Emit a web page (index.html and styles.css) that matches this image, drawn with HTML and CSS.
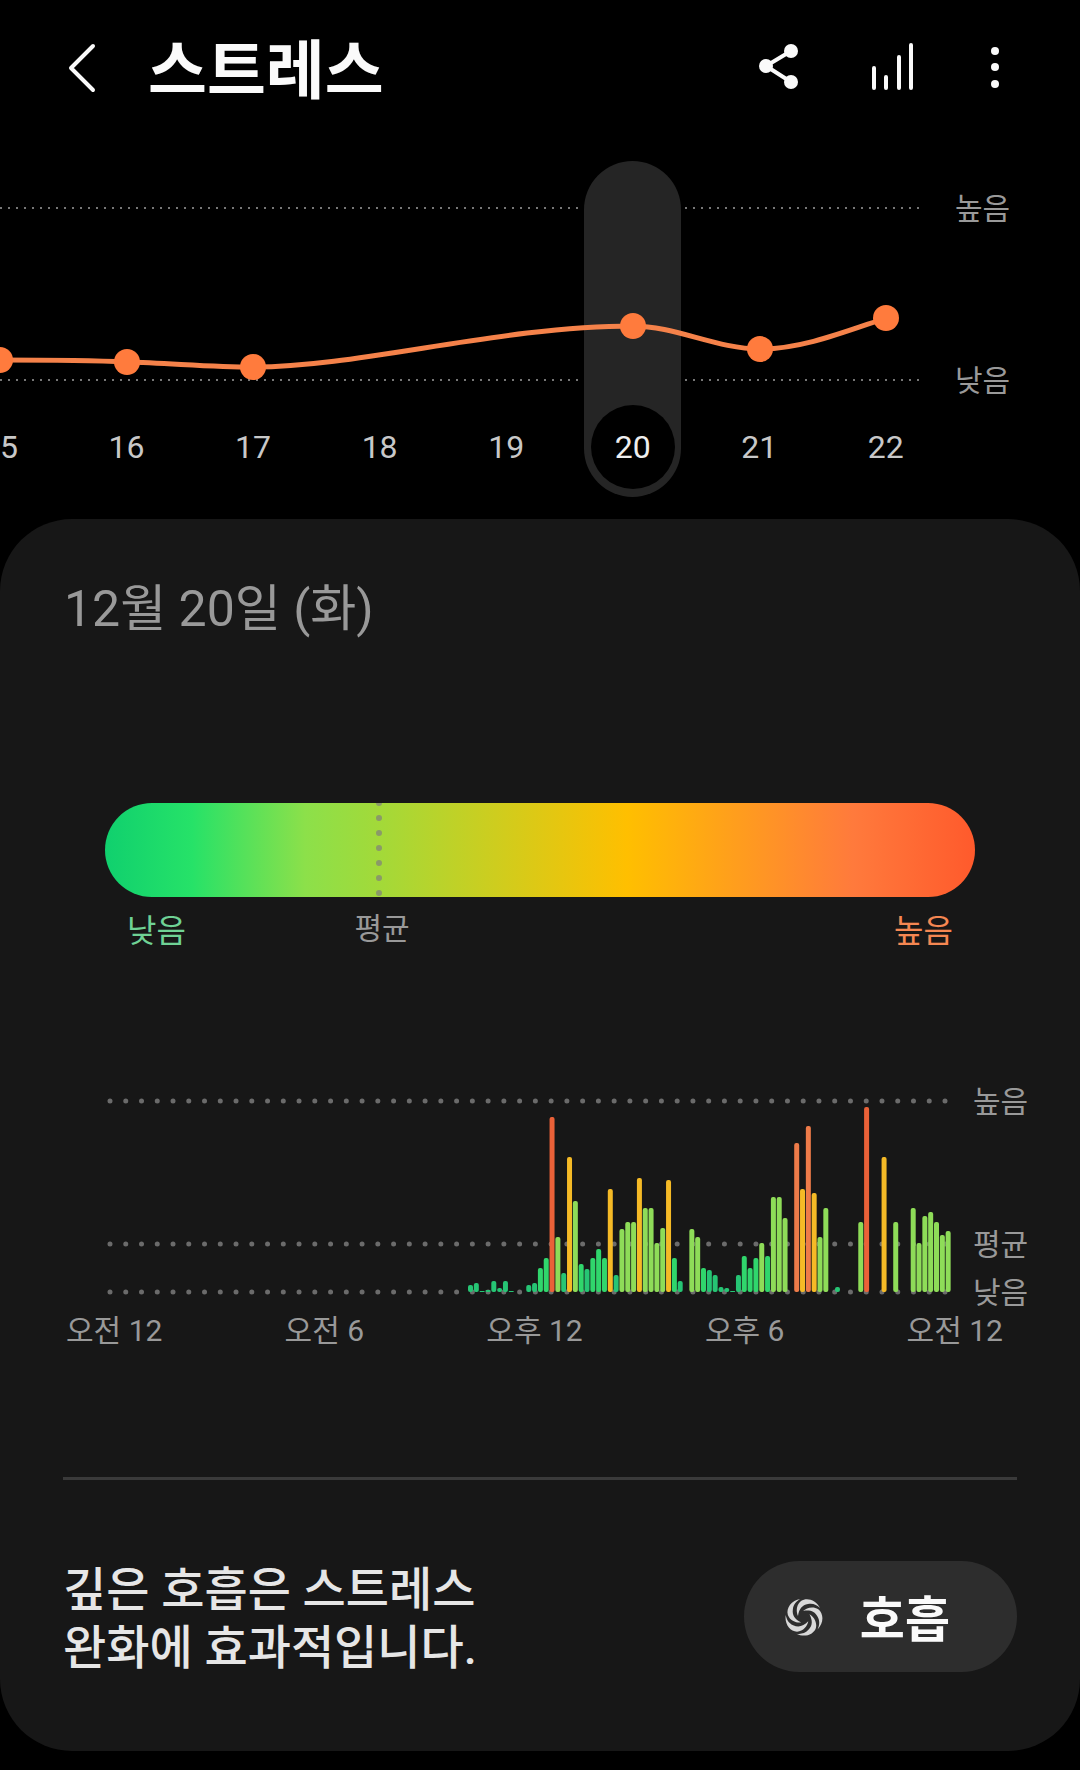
FILE: index.html
```html
<!DOCTYPE html>
<html lang="ko">
<head>
  <meta charset="utf-8">
  <meta name="viewport" content="width=device-width, initial-scale=1">
  <title>스트레스</title>
  <link rel="stylesheet" href="styles.css">
</head>
<body>
  <header class="app-bar">
    <button class="icon-button" type="button" aria-label="뒤로">
      <svg width="48" height="56" viewBox="0 0 48 56" fill="none" stroke="currentColor" stroke-width="4" stroke-linecap="round" stroke-linejoin="round"><path d="M35 6 13 28l22 22"/></svg>
    </button>
    <h1 class="app-title">스트레스</h1>
    <div class="app-actions">
      <button class="icon-button" type="button" aria-label="공유">
        <svg width="48" height="56" viewBox="0 0 48 56" fill="currentColor"><path d="M37 11 12 26l25 16" fill="none" stroke="currentColor" stroke-width="4"/><circle cx="37" cy="11" r="7"/><circle cx="12" cy="26" r="7"/><circle cx="37" cy="42" r="7"/></svg>
      </button>
      <button class="icon-button" type="button" aria-label="통계">
        <svg width="48" height="56" viewBox="0 0 48 56" fill="none" stroke="currentColor" stroke-width="4" stroke-linecap="round"><path d="M4 28v20M16 37v11M29 17v31M41 5v43"/></svg>
      </button>
      <button class="icon-button" type="button" aria-label="옵션 더보기">
        <svg width="18" height="56" viewBox="0 0 18 56" fill="currentColor"><circle cx="9" cy="11" r="4"/><circle cx="9" cy="27" r="4"/><circle cx="9" cy="44" r="4"/></svg>
      </button>
    </div>
  </header>

  <main>
    <section class="trend" aria-label="일별 스트레스">
      <div class="trend-plot">
        <div class="days">
          <button class="day" type="button"><span class="day-number">15</span></button>
          <button class="day" type="button"><span class="day-number">16</span></button>
          <button class="day" type="button"><span class="day-number">17</span></button>
          <button class="day" type="button"><span class="day-number">18</span></button>
          <button class="day" type="button"><span class="day-number">19</span></button>
          <button class="day is-selected" type="button" aria-pressed="true"><span class="day-number">20</span></button>
          <button class="day" type="button"><span class="day-number">21</span></button>
          <button class="day" type="button"><span class="day-number">22</span></button>
        </div>
        <svg class="trend-chart" viewBox="0 0 949 383" aria-hidden="true">
          <path class="trend-grid" d="M0 72H583M685 72H924M0 244H583M685 244H924"/>
          <path class="trend-line" d="M0 224C42 224 84 224 127 226C169 227 211 231 253 231C360 231 500 190 633 190C675 190 717 213 760 213C802 213 844 196 886 182"/>
          <g class="trend-dots"><circle cx="0" cy="224" r="13"/><circle cx="127" cy="226" r="13"/><circle cx="253" cy="231" r="13"/><circle cx="633" cy="190" r="13"/><circle cx="760" cy="213" r="13"/><circle cx="886" cy="182" r="13"/></g>
        </svg>
      </div>
      <div class="trend-levels"><span>높음</span><span>낮음</span></div>
    </section>

    <article class="card">
      <h2 class="date">12월 20일 (화)</h2>

      <section class="scale" style="--average: 63%" aria-label="스트레스 평균">
        <div class="scale-bar">
          <svg class="scale-marker" width="6" height="94" viewBox="0 0 6 94"><path d="M3 0V94"/></svg>
        </div>
        <div class="scale-labels">
          <span class="scale-low">낮음</span>
          <span class="scale-average">평균</span>
          <span class="scale-high">높음</span>
        </div>
      </section>

      <section class="hourly" aria-label="시간별 스트레스">
        <div class="hourly-body">
          <svg class="hourly-chart" viewBox="0 0 920 230" aria-hidden="true">
            <g class="hourly-grid">
              <path pathLength="53" d="M57 20H892"/>
              <path pathLength="53" d="M57 163H892"/>
              <path pathLength="53" d="M57 211H892"/>
            </g>
            <g id="bars"></g>
          </svg>
          <div class="hourly-levels"><span>높음</span><span>평균</span><span>낮음</span></div>
        </div>
        <div class="hours"><span>오전 12</span><span>오전 6</span><span>오후 12</span><span>오후 6</span><span>오전 12</span></div>
      </section>

      <section class="breathe">
        <p class="breathe-text">깊은 호흡은 스트레스<br>완화에 효과적입니다.</p>
        <button class="breathe-button" type="button">
          <svg width="38" height="38" viewBox="-19 -19 38 38" fill="currentColor" aria-hidden="true">
            <defs><path id="blade" d="M16-9C12-17 3-20-3-16C-8-12-8-5-6-1C-5-8-2-12 4-13C9-14 13-12 16-9Z"/></defs>
            <use href="#blade"/><use href="#blade" transform="rotate(72)"/><use href="#blade" transform="rotate(144)"/><use href="#blade" transform="rotate(216)"/><use href="#blade" transform="rotate(288)"/>
          </svg>
          <span class="breathe-label">호흡</span>
        </button>
      </section>
    </article>
  </main>
  <script src="chart.js"></script>
</body>
</html>
```
FILE: styles.css
```css
* {
  box-sizing: border-box;
}

body {
  margin: 0;
  background: #000;
  color: #999;
  font-family: Roboto, "Noto Sans CJK KR", sans-serif;
  font-size: 30px;
  line-height: 40px;
}

button {
  padding: 0;
  border: 0;
  background: none;
  color: inherit;
  font: inherit;
}

svg {
  display: block;
}

h1,
h2,
p {
  margin: 0;
}

.app-bar {
  display: flex;
  align-items: center;
  height: 136px;
  padding: 0 76px 0 58px;
  color: #fafafa;
}

.app-title {
  margin-left: 42px;
  padding-top: 8px;
  font-size: 64px;
  font-weight: 700;
  line-height: 80px;
}

.app-actions {
  display: flex;
  gap: 68px;
  margin-left: auto;
}

.trend {
  display: grid;
  grid-template-columns: minmax(0, 1fr) 131px;
}

.trend-plot {
  display: grid;
  overflow: hidden;
}

.trend-plot > * {
  grid-area: 1 / 1;
}

.trend-chart {
  width: 100%;
  pointer-events: none;
}

.trend-grid {
  fill: none;
  stroke: #777;
  stroke-width: 2;
  stroke-dasharray: 2 6;
}

.trend-line {
  fill: none;
  stroke: #f5824a;
  stroke-width: 5;
}

.trend-dots {
  fill: #ff7b3d;
}

.days {
  display: grid;
  grid-template-columns: repeat(8, calc(100% / 7.5));
  justify-content: end;
  padding: 25px 0 22px;
}

.day {
  display: flex;
  align-items: flex-end;
  justify-content: center;
  justify-self: center;
  width: 97px;
  padding-bottom: 8px;
  border-radius: 49px;
  color: #c8c8c8;
  font-size: 32px;
}

.day-number {
  width: 84px;
  border-radius: 50%;
  line-height: 84px;
  text-align: center;
}

.day.is-selected {
  background: #252525;
  color: #eee;
}

.is-selected .day-number {
  background: #000;
}

.trend-levels {
  display: flex;
  flex-direction: column;
  gap: 132px;
  padding: 53px 0 0 6px;
}

.card {
  margin-bottom: 19px;
  padding: 60px 0 74px;
  border-radius: 72px;
  background: #171717;
}

.date {
  padding: 0 64px;
  font-size: 50px;
  font-weight: 400;
  line-height: 60px;
}

.scale {
  padding: 164px 105px 0;
}

.scale-bar,
.scale-labels {
  display: grid;
  grid-template-columns: var(--average) 1fr;
}

.scale-bar {
  height: 94px;
  overflow: hidden;
  border-radius: 47px;
  background: linear-gradient(90deg, #10d06e, #26e268 10%, #8ce04a 23%, #a4d938 32%, #ffbf00 60%, #ff7a3c 86%, #ff5a2c);
}

.scale-marker {
  justify-self: center;
  fill: none;
  stroke: #8a9a68;
  stroke-width: 6;
  stroke-linecap: round;
  stroke-dasharray: 0 15;
}

.scale-labels {
  height: 52px;
  padding-top: 12px;
}

.scale-low,
.scale-average {
  grid-area: 1 / 1;
}

.scale-low,
.scale-high {
  padding: 2px 22px 0;
  font-size: 32px;
}

.scale-low {
  color: #6fd295;
}

.scale-average {
  justify-self: center;
  padding-left: 6px;
}

.scale-high {
  justify-self: end;
  color: #f58752;
}

.hourly {
  padding-top: 132px;
}

.hourly-body {
  display: grid;
  grid-template-columns: minmax(0, 1fr) 54px;
  padding: 0 53px;
}

.hourly-chart {
  width: 100%;
}

.hourly-grid {
  fill: none;
  stroke: #6b6b6b;
  stroke-width: 5;
  stroke-linecap: round;
  stroke-dasharray: 0 1;
}

.hourly-levels {
  display: grid;
  grid-template-rows: 143px 48px 38px;
  padding-top: 1px;
  white-space: nowrap;
}

.hours {
  display: flex;
  justify-content: space-between;
  padding: 0 77px 0 66px;
}

.breathe {
  display: flex;
  align-items: flex-start;
  justify-content: space-between;
  margin: 126px 63px 0;
  padding-top: 81px;
  border-top: 3px solid #3a3a3a;
}

.breathe-text {
  color: #e6e6e6;
  font-size: 47px;
  font-weight: 500;
  line-height: 58px;
}

.breathe-button {
  display: flex;
  align-items: center;
  gap: 37px;
  height: 111px;
  padding: 0 67px 0 41px;
  border-radius: 56px;
  background: #2d2d2d;
  color: #fafafa;
  font-size: 49px;
  font-weight: 700;
}

.breathe-button svg {
  color: #d8d8d8;
}

.breathe-label {
  padding-top: 8px;
}
```
FILE: chart.js
```js
// Ten-minute readings: [slot, height, level]
const readings = [
  [0, 7, 'low'], [1, 9, 'low'], [2, 1, 'low'], [3, 2, 'low'], [4, 11, 'low'], [5, 4, 'low'], [6, 11, 'low'], [7, 1, 'low'],
  [10, 7, 'low'], [11, 9, 'low'], [12, 24, 'mild'], [13, 34, 'mild'], [14, 175, 'peak'], [15, 55, 'mid'], [16, 19, 'low'],
  [17, 135, 'warm'], [18, 91, 'mid'], [19, 28, 'mild'], [20, 23, 'low'], [21, 34, 'mild'], [22, 43, 'mild'], [23, 34, 'mild'],
  [24, 103, 'warm'], [25, 17, 'low'], [26, 63, 'mid'], [27, 70, 'mid'], [28, 70, 'mid'], [29, 114, 'warm'], [30, 84, 'mid'],
  [31, 84, 'mid'], [32, 49, 'mid'], [33, 64, 'mid'], [34, 112, 'warm'], [35, 34, 'mild'], [36, 11, 'low'], [38, 63, 'mid'],
  [39, 55, 'mid'], [40, 24, 'mild'], [41, 22, 'low'], [42, 17, 'low'], [43, 5, 'low'], [44, 4, 'low'], [45, 1, 'low'],
  [46, 17, 'low'], [47, 36, 'mild'], [48, 24, 'mild'], [49, 34, 'mild'], [50, 49, 'mid'], [51, 36, 'mild'], [52, 95, 'mid'],
  [53, 95, 'mid'], [54, 74, 'mid'], [56, 149, 'high'], [57, 103, 'warm'], [58, 166, 'high'], [59, 99, 'warm'], [60, 55, 'mid'],
  [61, 84, 'mid'], [63, 5, 'low'], [67, 70, 'mid'], [68, 185, 'peak'], [71, 135, 'warm'], [73, 70, 'mid'], [76, 84, 'mid'],
  [77, 49, 'mid'], [78, 76, 'mid'], [79, 80, 'mid'], [80, 70, 'mid'], [81, 57, 'mid'], [82, 61, 'mid']
];
const colors = { low: '#26c574', mild: '#30d66c', mid: '#8edc58', warm: '#f5ba26', high: '#ee7b49', peak: '#ea6138' };
const group = document.getElementById('bars');

for (const [slot, height, level] of readings) {
  const bar = document.createElementNS('http://www.w3.org/2000/svg', 'rect');
  bar.setAttribute('x', 415 + slot * 5.825);
  bar.setAttribute('y', 211 - height);
  bar.setAttribute('width', 5);
  bar.setAttribute('height', height);
  bar.setAttribute('rx', Math.min(2, height / 2));
  bar.setAttribute('fill', colors[level]);
  group.append(bar);
}
```
